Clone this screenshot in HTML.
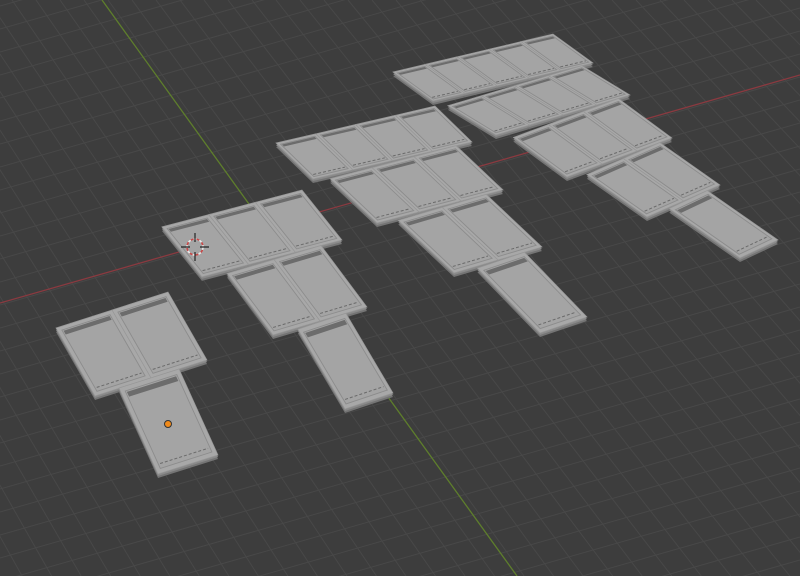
<!DOCTYPE html>
<html><head><meta charset="utf-8"><style>
html,body{margin:0;padding:0;background:#3d3d3d;width:800px;height:576px;overflow:hidden}
svg{display:block}
</style></head><body>
<svg id="s" width="800" height="576" viewBox="0 0 800 576" xmlns="http://www.w3.org/2000/svg">
<rect width="800" height="576" fill="#3d3d3d"/>
<g id="grid" stroke="#484848" stroke-width="1"></g>
<line x1="0" y1="303" x2="800" y2="75" stroke="#8a3a40" stroke-width="1.3"/>
<line x1="102" y1="0" x2="517" y2="576" stroke="#5e7e2c" stroke-width="1.3"/>
<g id="tiles"></g>
<g transform="translate(195,247)">
<circle r="8" fill="none" stroke="#e8e8e8" stroke-width="1.6" stroke-dasharray="3,3"/>
<circle r="8" fill="none" stroke="#c84848" stroke-width="1.6" stroke-dasharray="3,3" stroke-dashoffset="3"/>
<path d="M-14 0H-5M5 0H14M0 -14V-5M0 5V14" stroke="#222" stroke-width="1.2"/>
</g>
<circle cx="168" cy="424" r="3.5" fill="#f08a1a" stroke="#333" stroke-width="1"/>
</svg>
<script>
var NS="http://www.w3.org/2000/svg";
var grid=document.getElementById('grid');
function ln(x1,y1,x2,y2,p){var l=document.createElementNS(NS,'line');l.setAttribute('x1',x1);l.setAttribute('y1',y1);l.setAttribute('x2',x2);l.setAttribute('y2',y2);p.appendChild(l);}
for(var y0=-40;y0<900;y0+=23){ln(0,y0,800,y0-228,grid);}
for(var x0=-900;x0<900;x0+=24){var k=0.72+(x0-102)*0.0004;ln(x0,0,x0+576*k,576,grid);}
var T=document.getElementById('tiles');
function poly(H,pts,fill,stroke,sw,dy){var s=pts.map(function(p){var q=H(p[0],p[1]);return q[0].toFixed(1)+','+(q[1]+(dy||0)).toFixed(1);}).join(' ');var e=document.createElementNS(NS,'polygon');e.setAttribute('points',s);e.setAttribute('fill',fill);if(stroke){e.setAttribute('stroke',stroke);e.setAttribute('stroke-width',sw);}else e.setAttribute('stroke','none');T.appendChild(e);}
function pl(H,a,b,col,sw,dash){var p=H(a[0],a[1]),q=H(b[0],b[1]);var l=document.createElementNS(NS,'line');l.setAttribute('x1',p[0]);l.setAttribute('y1',p[1]);l.setAttribute('x2',q[0]);l.setAttribute('y2',q[1]);l.setAttribute('stroke',col);l.setAttribute('stroke-width',sw);if(dash)l.setAttribute('stroke-dasharray',dash);T.appendChild(l);}
function rect(a,b,c,d){return[[a,b],[c,b],[c,d],[a,d]];}
function bil(TL,TR,BR,BL){return function(x,y){var ax=TL[0]+(TR[0]-TL[0])*x,ay=TL[1]+(TR[1]-TL[1])*x,bx=BL[0]+(BR[0]-BL[0])*x,by=BL[1]+(BR[1]-BL[1])*x;return[ax+(bx-ax)*y,ay+(by-ay)*y];};}
function group(RT0,sh,rows){var tiles=[];var RT=RT0,Wp=rows[0][1];
rows.forEach(function(r,k){var RB=r[0],W=r[1],n=r[2];
 if(k>0){RT=[RT[0]-sh*Wp[0],RT[1]-sh*Wp[1]];}
 for(var m=0;m<n;m++){var tr=[RT[0]-m*W[0],RT[1]-m*W[1]],br=[RB[0]-m*W[0],RB[1]-m*W[1]];
  tiles.push(bil([tr[0]-W[0],tr[1]-W[1]],tr,br,[br[0]-W[0],br[1]-W[1]]));}
 RT=RB;Wp=W;});
tiles.forEach(function(H){poly(H,rect(0,0,1,1),'#747474',null,0,4);});
tiles.forEach(function(H){poly(H,rect(0,0,1,1),'#8a8a8a',null,0,2);});
tiles.forEach(function(H){
poly(H,rect(0,0,1,1),'#a8a8a8','#979797',0.7);
poly(H,rect(0.07,0.05,0.93,0.95),'#a4a4a4','#8c8c8c',0.9);
poly(H,rect(0.09,0.065,0.91,0.12),'#6c6c6c',null,0);
pl(H,[0.1,0.9],[0.9,0.9],'#6a6a6a',1,'3,2');
});}
group([168,292],0.5,[[[207,360],[56,-18],2],[[218,455],[60,-19],1]]);
group([302,190],0.45,[[[342,240],[46.7,-12.3],3],[[367,307],[47,-14],2],[[393,393],[48,-16],1]]);
group([435,106],0.4,[[[472,142],[39.75,-9.25],4],[[503,190],[42,-11],3],[[542,247],[44,-13],2],[[587,317],[47,-16],1]]);
group([553,34],0.35,[[[593,63],[32,-7.6],5],[[630,95],[33.5,-10],4],[[672,138],[35,-13],3],[[720,185],[36.5,-16],2],[[778,240],[38,-18],1]]);
</script>
</body></html>
